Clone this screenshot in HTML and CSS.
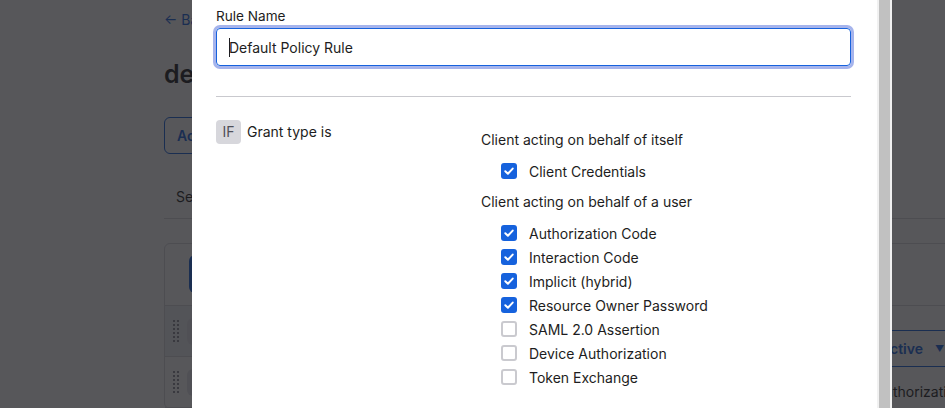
FILE: index.html
```html
<!DOCTYPE html>
<html lang="en">
<head>
<meta charset="utf-8">
<title>Edit Rule</title>
<link rel="stylesheet" href="styles.css">
</head>
<body>
<div class="page">
  <a class="back">← Back to Authorization Servers</a>
  <h1 class="title">default</h1>
  <div class="actions"><button class="btn-outline">Actions</button></div>
  <nav class="tabs">
    <span class="tab">Settings</span>
    <span class="tab">Scopes</span>
    <span class="tab">Claims</span>
    <span class="tab tab-active">Access Policies</span>
    <span class="tab">Token Preview</span>
  </nav>
  <section class="policies">
    <div class="policies-head"><button class="btn-primary">Add New Access Policy</button></div>
    <div class="policies-body">
      <ul class="policy-list">
        <li class="policy selected"><span class="handle"></span><span class="prio">1</span><span class="pname">Default Policy</span></li>
        <li class="policy"><span class="handle"></span><span class="prio">2</span><span class="pname">Second Policy</span></li>
      </ul>
      <div class="panel">
        <div class="panel-head">
          <div class="panel-title">Default Policy</div>
          <button class="btn-status">Active <span class="caret">▼</span></button>
        </div>
        <div class="panel-desc">Authorization Code, Client Credentials</div>
      </div>
    </div>
  </section>
</div>

<div class="overlay"></div>

<div class="modal">
  <div class="modal-content">
    <label class="field-label">Rule Name</label>
    <div class="input"><span class="text-caret"></span>Default Policy Rule</div>
    <hr class="divider">
    <div class="condition">
      <div class="cond-left"><span class="if-badge">IF</span><span>Grant type is</span></div>
      <div class="cond-right">
        <div class="group-title">Client acting on behalf of itself</div>
        <ul class="checks">
          <li><span class="cb on"><svg viewBox="0 0 16 16"><path d="M4.3 8.3 L6.9 10.8 L11.7 5.6"/></svg></span>Client Credentials</li>
        </ul>
        <div class="group-title">Client acting on behalf of a user</div>
        <ul class="checks">
          <li><span class="cb on"><svg viewBox="0 0 16 16"><path d="M4.3 8.3 L6.9 10.8 L11.7 5.6"/></svg></span>Authorization Code</li>
          <li><span class="cb on"><svg viewBox="0 0 16 16"><path d="M4.3 8.3 L6.9 10.8 L11.7 5.6"/></svg></span>Interaction Code</li>
          <li><span class="cb on"><svg viewBox="0 0 16 16"><path d="M4.3 8.3 L6.9 10.8 L11.7 5.6"/></svg></span>Implicit (hybrid)</li>
          <li><span class="cb on"><svg viewBox="0 0 16 16"><path d="M4.3 8.3 L6.9 10.8 L11.7 5.6"/></svg></span>Resource Owner Password</li>
          <li><span class="cb"></span>SAML 2.0 Assertion</li>
          <li><span class="cb"></span>Device Authorization</li>
          <li><span class="cb"></span>Token Exchange</li>
        </ul>
      </div>
    </div>
  </div>
  <div class="scrollbar"><div class="thumb"></div></div>
</div>
</body>
</html>
```

FILE: styles.css
```css
* { box-sizing: border-box; }
html, body { margin: 0; padding: 0; }
body {
  width: 945px;
  height: 408px;
  overflow: hidden;
  background: #ffffff;
  font-family: Inter, "Liberation Sans", sans-serif;
  font-size: 14px;
  color: #1d1d21;
}
ul { list-style: none; margin: 0; padding: 0; }
button { font-family: inherit; }

/* background page */
.page {
  width: 1400px;
  padding: 10px 0 0 164px;
}
.back {
  display: block;
  line-height: 20px;
  color: #1662dd;
}
.title {
  margin: 29px 0 0;
  font-size: 25px;
  line-height: 30px;
  font-weight: 600;
}
.actions { margin-top: 28px; }
.btn-outline {
  height: 37px;
  padding: 0 12px;
  border: 1px solid #1662dd;
  border-radius: 6px;
  background: #fff;
  color: #1662dd;
  font-size: 14px;
  font-weight: 600;
}
.tabs {
  margin-top: 23px;
  display: flex;
  border-bottom: 1px solid #d7d7dc;
}
.tab {
  padding: 10px 12px 11px;
  line-height: 20px;
}
.tab-active { color: #1662dd; }
.policies {
  margin-top: 24px;
  border: 1px solid #d7d7dc;
  border-radius: 6px;
}
.policies-head {
  padding: 11px 24px 12px;
  border-bottom: 1px solid #d7d7dc;
}
.btn-primary {
  height: 38px;
  padding: 0 16px;
  border: 0;
  border-radius: 6px;
  background: #1662dd;
  color: #fff;
  font-size: 14px;
  font-weight: 600;
}
.policies-body {
  display: grid;
  grid-template-columns: 250px 1fr;
}
.policy-list { border-right: 1px solid #d7d7dc; }
.policy {
  height: 51px;
  padding: 0 8px;
  display: flex;
  align-items: center;
  gap: 8px;
  border-bottom: 1px solid #d7d7dc;
}
.policy.selected { background: #eef1f8; }
.handle {
  width: 6px;
  height: 22px;
  background-image: radial-gradient(circle, #8c8c96 0.9px, transparent 1.2px);
  background-size: 4px 4px;
  background-position: -1px -1px;
}
.prio {
  width: 28px;
  height: 27px;
  border-radius: 6px;
  background: #e5e5ea;
  display: flex;
  align-items: center;
  justify-content: center;
}
.panel { padding: 24px 0 0 24px; }
.panel-head { display: flex; }
.panel-title { width: 428px; font-size: 20px; font-weight: 600; }
.btn-status {
  height: 37px;
  padding: 0 12px;
  border: 1px solid #1662dd;
  border-radius: 6px;
  background: #fff;
  color: #1662dd;
  font-size: 14px;
  font-weight: 600;
  display: flex;
  align-items: center;
  gap: 12px;
}
.caret { font-size: 9px; }
.panel-desc {
  margin: 15px 0 0 436px;
  line-height: 20px;
}

/* overlay + modal */
.overlay {
  position: fixed;
  inset: 0;
  background: rgba(29, 29, 33, 0.74);
}
.modal {
  position: fixed;
  left: 192px;
  top: 0;
  width: 700px;
  height: 408px;
  display: flex;
  background: #fff;
}
.modal-content {
  flex: 1;
  padding: 7px 26px 0 24px;
}
.scrollbar {
  width: 15px;
  background: #f1f1f1;
  padding: 0 2px;
}
.thumb { height: 100%; background: #c1c1c1; }

.field-label {
  display: block;
  font-size: 13.6px;
  line-height: 18px;
  margin-bottom: 3px;
}
.input {
  height: 38px;
  border: 1px solid #1662dd;
  border-radius: 4px;
  box-shadow: 0 0 0 3px #a6b4ec;
  padding: 0 12px;
  display: flex;
  align-items: center;
  font-size: 14px;
}
.text-caret {
  width: 1px;
  height: 19px;
  background: #1d1d21;
  margin-right: -1px;
}
.divider {
  margin: 30px 0 0;
  border: 0;
  border-top: 1px solid #c9c9ce;
}
.condition {
  margin-top: 23px;
  display: grid;
  grid-template-columns: 265px 1fr;
}
.cond-left {
  display: flex;
  align-items: center;
  gap: 6px;
  align-self: start;
  line-height: 20px;
}
.if-badge {
  width: 25px;
  height: 24px;
  border-radius: 4px;
  background: #d7d7dc;
  color: #505058;
  display: flex;
  align-items: center;
  justify-content: center;
}
.cond-right { padding-top: 10px; }
.group-title {
  line-height: 20px;
  margin-bottom: 9px;
}
.checks { padding-left: 20px; margin-bottom: 9px; }
.checks li {
  height: 24px;
  display: flex;
  align-items: center;
  gap: 12px;
}
.cb {
  width: 16px;
  height: 16px;
  flex: none;
  border-radius: 3px;
  border: 2px solid #cacacf;
  background: #fff;
}
.cb.on {
  border: 0;
  background: #1662dd;
}
.cb svg { display: block; width: 16px; height: 16px; }
.cb path {
  fill: none;
  stroke: #fff;
  stroke-width: 2;
  stroke-linecap: round;
  stroke-linejoin: round;
}
```
